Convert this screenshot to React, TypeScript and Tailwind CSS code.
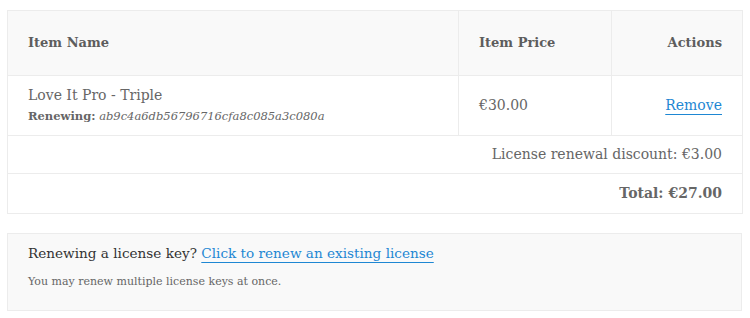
import React from "react";

const serif = "font-['DejaVu_Serif',serif]";

export default function App() {
  return (
    <div className={`min-h-[318px] bg-white pl-[7px] pt-[10px] text-[#666] ${serif}`}>
      <table className="w-[735px] table-fixed border-collapse border border-[#ececec] text-[14px]">
        <colgroup>
          <col className="w-[451px]" />
          <col className="w-[153px]" />
          <col className="w-[131px]" />
        </colgroup>
        <thead>
          <tr className="h-[65px] bg-[#f9f9f9] text-[13px]">
            <th className="border border-[#ececec] px-5 text-left font-bold text-[#5d5d5d]">Item Name</th>
            <th className="border border-[#ececec] px-5 text-left font-bold text-[#5d5d5d]">Item Price</th>
            <th className="border border-[#ececec] px-5 text-right font-bold text-[#5d5d5d]">Actions</th>
          </tr>
        </thead>
        <tbody>
          <tr className="h-[60px]">
            <td className="border border-[#ececec] px-5 pb-[2px] align-middle">
              <div className="leading-[22px]">Love It Pro - Triple</div>
              <div className="text-[11.5px] leading-[20px]">
                <span className="font-bold">Renewing:</span> <em>ab9c4a6db56796716cfa8c085a3c080a</em>
              </div>
            </td>
            <td className="border border-[#ececec] px-5">€30.00</td>
            <td className="border border-[#ececec] px-5 text-right">
              <a href="#" className="text-[#1e87d3] underline underline-offset-4">Remove</a>
            </td>
          </tr>
          <tr className="h-[38px]">
            <td colSpan={3} className="border border-[#ececec] px-5 text-right">
              License renewal discount: €3.00
            </td>
          </tr>
          <tr className="h-[40px]">
            <td colSpan={3} className="border border-[#ececec] px-5 text-right font-bold">
              Total: €27.00
            </td>
          </tr>
        </tbody>
      </table>

      <div className="mt-[19px] h-[78px] w-[735px] border border-[#ececec] bg-[#f9f9f9] px-5 pt-[7px]">
        <p className="text-[13.6px] leading-[24px] text-[#333]">
          Renewing a license key?{" "}
          <a href="#" className="text-[#1e87d3] underline underline-offset-4">
            Click to renew an existing license
          </a>
        </p>
        <p className="mt-[8px] text-[11px] leading-[18px] text-[#666]">You may renew multiple license keys at once.</p>
      </div>
    </div>
  );
}
